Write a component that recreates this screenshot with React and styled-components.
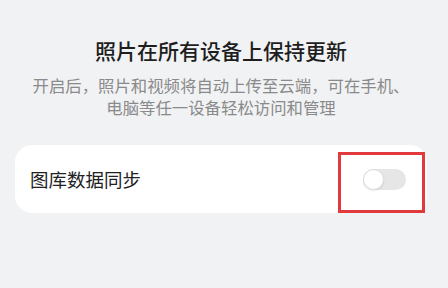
import React from "react";
import styled, { createGlobalStyle } from "styled-components";

const Global = createGlobalStyle`
  html, body {
    margin: 0;
    padding: 0;
    background: #f1f2f4;
    font-family: "Noto Sans CJK SC", "Noto Sans", sans-serif;
  }
`;

const Page = styled.div`
  width: 448px;
  height: 288px;
  box-sizing: border-box;
  padding: 36px 21px 0 15px;
  display: flex;
  flex-direction: column;
  align-items: center;
  overflow: hidden;
`;

const Title = styled.h1`
  margin: 0;
  font-size: 21px;
  line-height: 28px;
  font-weight: 500;
  color: #1e1e1e;
  text-align: center;
`;

const Subtitle = styled.p`
  margin: 10px 0 0;
  max-width: 384px;
  font-size: 16.4px;
  line-height: 22px;
  color: #8a8a8a;
  text-align: center;
`;

const Card = styled.div`
  position: relative;
  align-self: stretch;
  margin-top: 27px;
  height: 68px;
  background: #ffffff;
  border-radius: 17px;
  display: flex;
  align-items: center;
  justify-content: space-between;
  padding: 0 21px 0 15px;
`;

const Label = styled.span`
  font-size: 18.5px;
  line-height: 24px;
  color: #222222;
`;

const Track = styled.div`
  position: relative;
  width: 43px;
  height: 21px;
  border-radius: 11px;
  background: ${(p) => (p.$on ? "#3a7cf5" : "#e6e6e6")};
  display: flex;
  align-items: center;
  justify-content: ${(p) => (p.$on ? "flex-end" : "flex-start")};
`;

const Knob = styled.div`
  width: 19px;
  height: 19px;
  border-radius: 50%;
  background: #ffffff;
  border: 1px solid #dcdcdc;
  box-shadow: 0 1px 2px rgba(0, 0, 0, 0.08);
`;

const Highlight = styled.div`
  position: absolute;
  left: 323px;
  top: 7px;
  width: 87px;
  height: 61px;
  box-sizing: border-box;
  border: 3px solid #e2393d;
  pointer-events: none;
`;

export default function App() {
  return (
    <>
      <Global />
      <Page>
        <Title>照片在所有设备上保持更新</Title>
        <Subtitle>
          开启后，照片和视频将自动上传至云端，可在手机、电脑等任一设备轻松访问和管理
        </Subtitle>
        <Card>
          <Label>图库数据同步</Label>
          <Track $on={false}>
            <Knob />
          </Track>
          <Highlight />
        </Card>
      </Page>
    </>
  );
}
